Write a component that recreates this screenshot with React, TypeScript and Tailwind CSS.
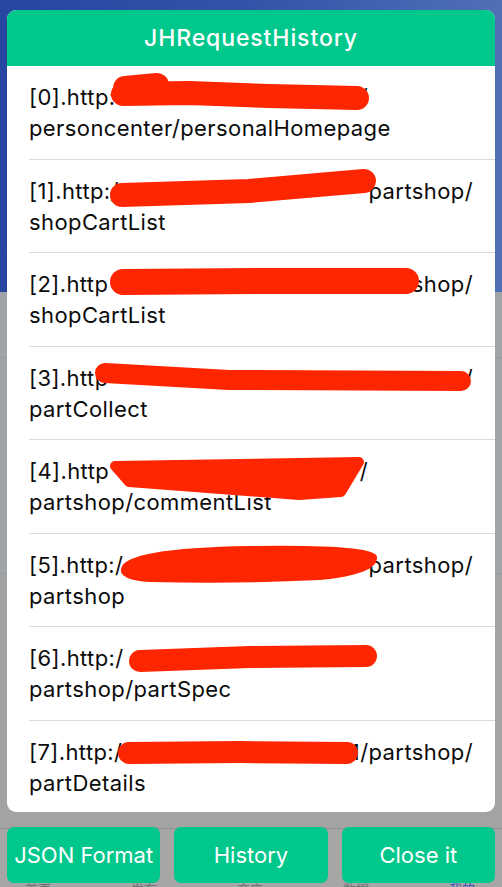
import React from 'react';

interface HistoryRow {
  id: number;
  prefix: string;
  suffix: string;
  tail: string;
  lineWidth: string;
  // red marker scribble, drawn in row-local pixels
  scribble: string;
  stroke: number;
}

const HISTORY: HistoryRow[] = [
  {
    id: 0,
    prefix: '[0].http:',
    suffix: '/',
    tail: 'personcenter/personalHomepage',
    lineWidth: 'w-[339px]',
    scribble: 'M94,28 L160,27 L240,30 L328,32 M96,22 L128,19',
    stroke: 24
  },
  {
    id: 1,
    prefix: '[1].http:/',
    suffix: 'partshop/',
    tail: 'shopCartList',
    lineWidth: 'w-full',
    scribble: 'M93,35 L220,31 L335,21',
    stroke: 24
  },
  {
    id: 2,
    prefix: '[2].http',
    suffix: 'shop/',
    tail: 'shopCartList',
    lineWidth: 'w-full',
    scribble: 'M94,29 L241,28 L377,28',
    stroke: 26
  },
  {
    id: 3,
    prefix: '[3].http',
    suffix: '/',
    tail: 'partCollect',
    lineWidth: 'w-full',
    scribble: 'M76,26 L200,33 L432,34',
    stroke: 20
  },
  {
    id: 4,
    prefix: '[4].http',
    suffix: '/',
    tail: 'partshop/commentList',
    lineWidth: 'w-[339px]',
    scribble: 'M86,26 L330,22 L312,52 L270,55 L100,42 Z',
    stroke: 10
  },
  {
    id: 5,
    prefix: '[5].http:/',
    suffix: 'partshop/',
    tail: 'partshop',
    lineWidth: 'w-full',
    scribble: 'M93,35 Q96,15 221,13 Q346,11 347,23 Q349,39 291,45 Q211,49 121,47 Q91,45 93,35 Z',
    stroke: 2
  },
  {
    id: 6,
    prefix: '[6].http:/',
    suffix: '',
    tail: 'partshop/partSpec',
    lineWidth: 'w-[339px]',
    scribble: 'M111,34 L221,30 L337,29',
    stroke: 22
  },
  {
    id: 7,
    prefix: '[7].http:/',
    suffix: '1/partshop/',
    tail: 'partDetails',
    lineWidth: 'w-full',
    scribble: 'M100,32 L211,31 L318,32',
    stroke: 22
  }
];

const TABS = ['首页', '发布', '商店', '数据', '我的'];

export default function App() {
  return (
    <div className="relative w-[502px] h-[887px] overflow-hidden font-['Inter',sans-serif]">
      {/* dimmed app screen underneath */}
      <div className="flex h-full flex-col">
        <div className="h-[292px] bg-gradient-to-r from-[#2646a2] via-[#3353a8] to-[#4f70b6]" />
        <div className="flex flex-1 flex-col bg-[#a0a4a9]">
          <div className="h-[66px] border-b border-[#979ba0]" />
          <div className="h-[216px] border-b border-[#979ba0]" />
          <div className="flex-1 bg-[#a3a3a3]" />
        </div>
        <div className="h-[59px] border-t border-[#8f8f8f] bg-[#a6a6a6] flex gap-[80px] pl-[25px] pt-[52px] text-[13px] leading-[16px] font-['Noto_Sans_CJK_SC',sans-serif] text-[#6f6f6f]">
          {TABS.map((t, i) => (
            <span key={t} className={i === 4 ? 'text-[#2a50b8]' : ''}>{t}</span>
          ))}
        </div>
      </div>

      {/* request history sheet */}
      <div className="absolute inset-0 flex flex-col px-[7px] pt-[10px]">
        <div className="h-[802px] overflow-hidden rounded-[9px] bg-white flex flex-col">
          <div className="h-[56px] shrink-0 bg-[#00c78c] flex items-center justify-center text-white text-[23px] tracking-[0.9px] font-medium">
            JHRequestHistory
          </div>
          <div className="flex-1 overflow-hidden">
            {HISTORY.map((row) => (
              <div
                key={row.id}
                className="relative ml-[22px] pr-[22px] pt-[16px] pb-[14.5px] border-t border-[#dadada] first:border-t-0 text-[22px] leading-[31px] tracking-[0.4px] text-[#0c0c0c]"
              >
                <div className={`flex whitespace-nowrap ${row.lineWidth}`}>
                  <span>{row.prefix}</span>
                  <span className="flex-1" />
                  <span>{row.suffix}</span>
                </div>
                <div className="whitespace-nowrap">{row.tail}</div>
                <svg
                  className="absolute left-0 top-0 pointer-events-none"
                  width="467"
                  height="94"
                  viewBox="0 0 467 94"
                >
                  <path
                    d={row.scribble}
                    fill={row.scribble.endsWith('Z') ? '#fe2600' : 'none'}
                    stroke="#fe2600"
                    strokeWidth={row.stroke}
                    strokeLinecap="round"
                    strokeLinejoin="round"
                  />
                </svg>
              </div>
            ))}
          </div>
        </div>

        <div className="mt-[15px] grid grid-cols-3 gap-[14px]">
          {['JSON Format', 'History', 'Close it'].map((label) => (
            <button
              key={label}
              className="h-[56px] rounded-[7px] bg-[#00c78c] text-white text-[22px] flex items-center justify-center"
            >
              {label}
            </button>
          ))}
        </div>
      </div>
    </div>
  );
}
